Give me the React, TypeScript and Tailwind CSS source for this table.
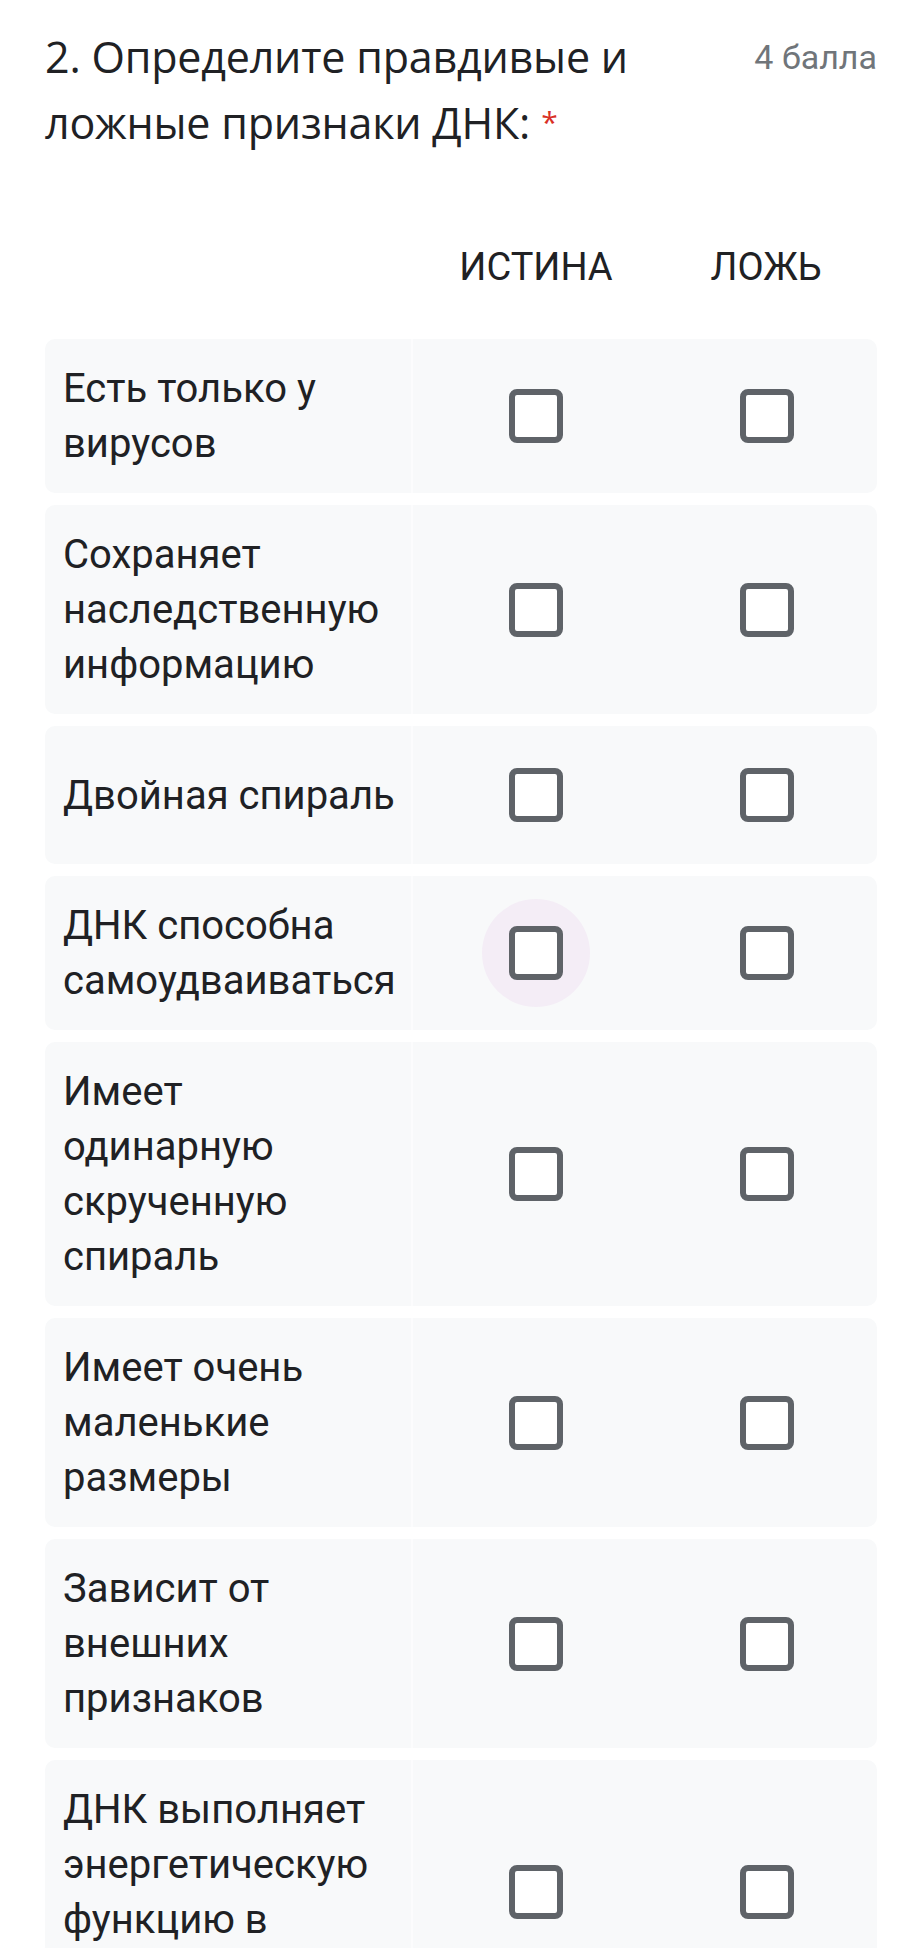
import React from 'react';

interface GridRow {
  lines: string[];
  focused?: boolean;
}

const rows: GridRow[] = [
  { lines: ['Есть только у', 'вирусов'] },
  { lines: ['Сохраняет', 'наследственную', 'информацию'] },
  { lines: ['Двойная спираль'] },
  { lines: ['ДНК способна', 'самоудваиваться'], focused: true },
  { lines: ['Имеет', 'одинарную', 'скрученную', 'спираль'] },
  { lines: ['Имеет очень', 'маленькие', 'размеры'] },
  { lines: ['Зависит от', 'внешних', 'признаков'] },
  { lines: ['ДНК выполняет', 'энергетическую', 'функцию в', 'клетке'] },
];

const Checkbox = ({ focused }: { focused?: boolean }) => (
  <div className="flex items-center justify-center">
    <div
      className={
        focused
          ? 'w-[108px] h-[108px] rounded-full bg-[#f4edf6] flex items-center justify-center'
          : 'w-[108px] h-[108px] rounded-full flex items-center justify-center'
      }
    >
      <div className="w-[54px] h-[54px] rounded-[8px] border-[6px] border-[#5f6368] bg-white" />
    </div>
  </div>
);

const App = () => {
  return (
    <div className="w-[922px] bg-white px-[45px] pt-[24px] pb-[40px] text-[#202124] font-['Roboto',sans-serif]">
      {/* question title */}
      <div className="flex items-start justify-between">
        <h2 className="h-[132px] font-['Open_Sans',sans-serif] text-[43px] leading-[66px] tracking-[-0.2px]">
          2. Определите правдивые и
          <br />
          ложные признаки ДНК:{' '}
          <span className="relative top-[-6px] text-[30px] leading-none text-[#d93025]">*</span>
        </h2>
        <span className="text-[34px] leading-[66px] text-[#70757a]">
          4 балла
        </span>
      </div>

      {/* column headers */}
      <div className="grid grid-cols-[368px_1fr_1fr] mt-[87px] mb-[48px]">
        <div />
        <div className="pl-[12px] col-span-2 grid grid-cols-2">
          <div className="text-center text-[38px] leading-[48px] pr-[4px]">ИСТИНА</div>
          <div className="text-center text-[38px] leading-[48px] pl-[4px]">ЛОЖЬ</div>
        </div>
      </div>

      {/* rows */}
      <div className="flex flex-col gap-[12px]">
        {rows.map((row, i) => (
          <div key={i} className="flex min-h-[138px]">
            <div className="w-[368px] shrink-0 bg-[#f8f9fa] rounded-l-[10px] border-r-2 border-[#fcfcfd] pl-[18px] pr-[10px] py-[22px] flex flex-col justify-center">
              {row.lines.map((line, j) => (
                <span key={j} className="block whitespace-nowrap text-[40px] leading-[55px]">
                  {line}
                </span>
              ))}
            </div>
            <div className="flex-1 bg-[#f8f9fa] rounded-r-[10px] pl-[12px] grid grid-cols-2 items-center">
              <div className="pr-[5px]">
                <Checkbox focused={row.focused} />
              </div>
              <div className="pl-[5px]">
                <Checkbox />
              </div>
            </div>
          </div>
        ))}
      </div>
    </div>
  );
};

export default App;
